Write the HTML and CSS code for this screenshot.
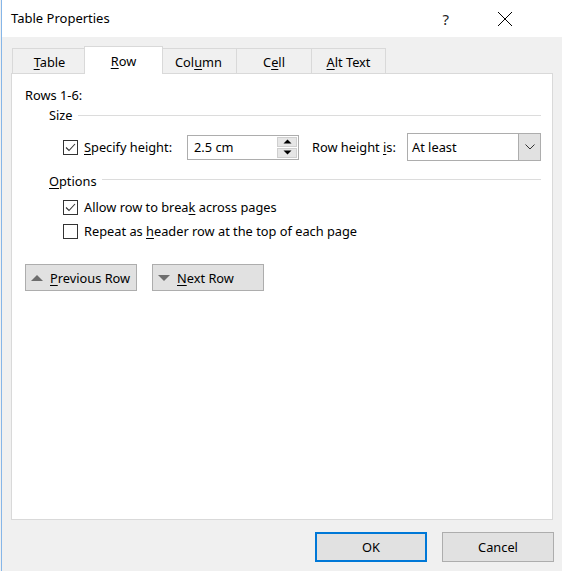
FILE: index.html
```html
<!DOCTYPE html>
<html>
<head>
<meta charset="utf-8">
<link rel="stylesheet" href="styles.css">
</head>
<body>
<div class="frame">
  <div class="titlebar">
    <span class="title">Table Properties</span>
    <span class="help">?</span>
    <svg class="close" width="16" height="16" viewBox="0 0 16 16"><path d="M1 1L15 15M15 1L1 15" stroke="#000" stroke-width="1" fill="none"/></svg>
  </div>
  <div class="tabs">
    <div class="tab t1"><span><u>T</u>able</span></div>
    <div class="tab t2 active"><span><u>R</u>ow</span></div>
    <div class="tab t3"><span>Col<u>u</u>mn</span></div>
    <div class="tab t4"><span>C<u>e</u>ll</span></div>
    <div class="tab t5"><span><u>A</u>lt Text</span></div>
  </div>
  <div class="panel">
    <div class="rows-label">Rows 1-6:</div>
    <div class="group-head"><span>Size</span><div class="rule"></div></div>
    <div class="size-row">
      <span class="cb checked"><svg width="13" height="13" viewBox="0 0 13 13"><path d="M2 6.5L5 9.5L11 3" stroke="#333" stroke-width="1.1" fill="none"/></svg></span>
      <span class="lbl-spec"><u>S</u>pecify height:</span>
      <div class="spin">
        <span class="spin-val">2.5 cm</span>
        <div class="spin-btns">
          <div class="sb"><svg width="9" height="5" viewBox="0 0 9 5"><path d="M0.5 4.5L4.5 0.5L8.5 4.5Z" fill="#000"/></svg></div>
          <div class="sb"><svg width="9" height="5" viewBox="0 0 9 5"><path d="M0.5 0.5L4.5 4.5L8.5 0.5Z" fill="#000"/></svg></div>
        </div>
      </div>
      <span class="lbl-rh">Row height <u>i</u>s:</span>
      <div class="combo">
        <span class="combo-val">At least</span>
        <div class="combo-btn"><svg width="10" height="6" viewBox="0 0 10 6"><path d="M0.5 0.5L5 5L9.5 0.5" stroke="#333" stroke-width="1" fill="none"/></svg></div>
      </div>
    </div>
    <div class="group-head opt"><span><u>O</u>ptions</span><div class="rule"></div></div>
    <div class="check-row first">
      <span class="cb checked"><svg width="13" height="13" viewBox="0 0 13 13"><path d="M2 6.5L5 9.5L11 3" stroke="#333" stroke-width="1.1" fill="none"/></svg></span>
      <span>Allow row to brea<u>k</u> across pages</span>
    </div>
    <div class="check-row">
      <span class="cb"></span>
      <span>Repeat as <u>h</u>eader row at the top of each page</span>
    </div>
    <div class="nav-row">
      <button class="btn nav"><svg width="12" height="6" viewBox="0 0 12 6"><path d="M0 6L6 0L12 6Z" fill="#6d6d6d"/></svg><span><u>P</u>revious Row</span></button>
      <button class="btn nav"><svg width="12" height="6" viewBox="0 0 12 6"><path d="M0 0L6 6L12 0Z" fill="#6d6d6d"/></svg><span><u>N</u>ext Row</span></button>
    </div>
  </div>
  <div class="footer">
    <button class="btn ok">OK</button>
    <button class="btn cancel">Cancel</button>
  </div>
</div>
</body>
</html>
```
FILE: styles.css
```css
html, body {
  margin: 0;
  padding: 0;
}
body {
  width: 562px;
  height: 571px;
  overflow: hidden;
  background: #f0f0f0;
  font-family: "Noto Sans", sans-serif;
  font-size: 12.8px;
  color: #000;
}
.frame {
  margin-left: 1px;
  border-left: 1px solid #86b6e8;
  height: 571px;
  box-sizing: border-box;
  display: flex;
  flex-direction: column;
}
u {
  text-decoration: underline;
  text-underline-offset: 2px;
  text-decoration-thickness: 1px;
}
.titlebar {
  height: 37px;
  background: #fff;
  display: flex;
  align-items: center;
  padding-left: 9px;
  box-sizing: border-box;
}
.title {
  font-size: 13px;
  flex: 1;
  padding-bottom: 1px;
}
.help {
  font-size: 15px;
  margin-right: 48px;
  color: #222;
}
.close {
  margin-right: 49px;
}
.tabs {
  margin-top: 9px;
  padding-left: 10px;
  height: 27px;
  display: flex;
  align-items: flex-end;
}
.tab {
  height: 25px;
  box-sizing: border-box;
  border: 1px solid #d9d9d9;
  border-bottom: none;
  background: #f0f0f0;
  display: flex;
  justify-content: center;
  align-items: center;
  padding-top: 2px;
  margin-left: -1px;
}
.t1 { width: 75px; margin-left: 0; }
.t2 { width: 75px; }
.t3 { width: 77px; }
.t4 { width: 76px; }
.t5 { width: 75px; }
.tab.active {
  width: 79px;
  height: 28px;
  margin-left: -3px;
  margin-right: -2px;
  margin-bottom: -1px;
  background: #fff;
  position: relative;
  z-index: 1;
  padding-top: 0;
}
.panel {
  margin-left: 9px;
  width: 542px;
  height: 447px;
  box-sizing: border-box;
  border: 1px solid #d9d9d9;
  background: #fff;
  padding: 11px 11px 0 13px;
}
.rows-label {
  line-height: 20px;
}
.group-head {
  display: flex;
  align-items: center;
  height: 20px;
  padding-left: 24px;
}
.group-head .rule {
  flex: 1;
  height: 1px;
  background: #dcdcdc;
  margin-left: 5px;
}
.group-head.opt {
  margin-top: 10px;
}
.group-head.opt .rule {
  margin-top: -3px;
}
.size-row {
  margin-top: 8px;
  height: 28px;
  display: flex;
  align-items: center;
  padding-left: 38px;
}
.cb {
  width: 15px;
  height: 15px;
  box-sizing: border-box;
  border: 1px solid #333;
  background: #fff;
  display: inline-flex;
  align-items: center;
  justify-content: center;
  flex: none;
}
.lbl-spec {
  margin-left: 6px;
  width: 103px;
}
.spin {
  width: 112px;
  height: 25px;
  box-sizing: border-box;
  border: 1px solid #adadad;
  display: flex;
  align-items: center;
}
.spin-val {
  flex: 1;
  padding-left: 6px;
}
.spin-btns {
  width: 20px;
  height: 21px;
  margin-right: 1px;
  display: flex;
  flex-direction: column;
  gap: 1px;
}
.sb {
  flex: 1;
  background: #e6e6e6;
  border: 1px solid #cfcfcf;
  display: flex;
  align-items: center;
  justify-content: center;
}
.lbl-rh {
  margin-left: 13px;
  width: 95px;
}
.combo {
  width: 134px;
  height: 28px;
  box-sizing: border-box;
  border: 1px solid #adadad;
  display: flex;
  align-items: center;
}
.combo-val {
  flex: 1;
  padding-left: 4px;
}
.combo-btn {
  width: 21px;
  height: 26px;
  background: #e1e1e1;
  border-left: 1px solid #adadad;
  display: flex;
  align-items: center;
  justify-content: center;
}
.check-row {
  height: 24px;
  display: flex;
  align-items: center;
  padding-left: 38px;
  gap: 6px;
}
.check-row.first {
  margin-top: 4px;
}
.nav-row {
  margin-top: 21px;
  display: flex;
  gap: 15px;
}
.btn {
  font-family: inherit;
  font-size: inherit;
  color: #000;
  background: #e1e1e1;
  border: 1px solid #adadad;
  box-sizing: border-box;
  padding: 0;
  margin: 0;
}
.nav {
  width: 112px;
  height: 27px;
  display: flex;
  align-items: center;
  padding-left: 5px;
  gap: 7px;
}
.footer {
  margin-top: 12px;
  display: flex;
  justify-content: flex-end;
  gap: 15px;
  padding-right: 8px;
}
.ok, .cancel {
  width: 112px;
  height: 30px;
}
.ok {
  border: 2px solid #0078d7;
}
```
